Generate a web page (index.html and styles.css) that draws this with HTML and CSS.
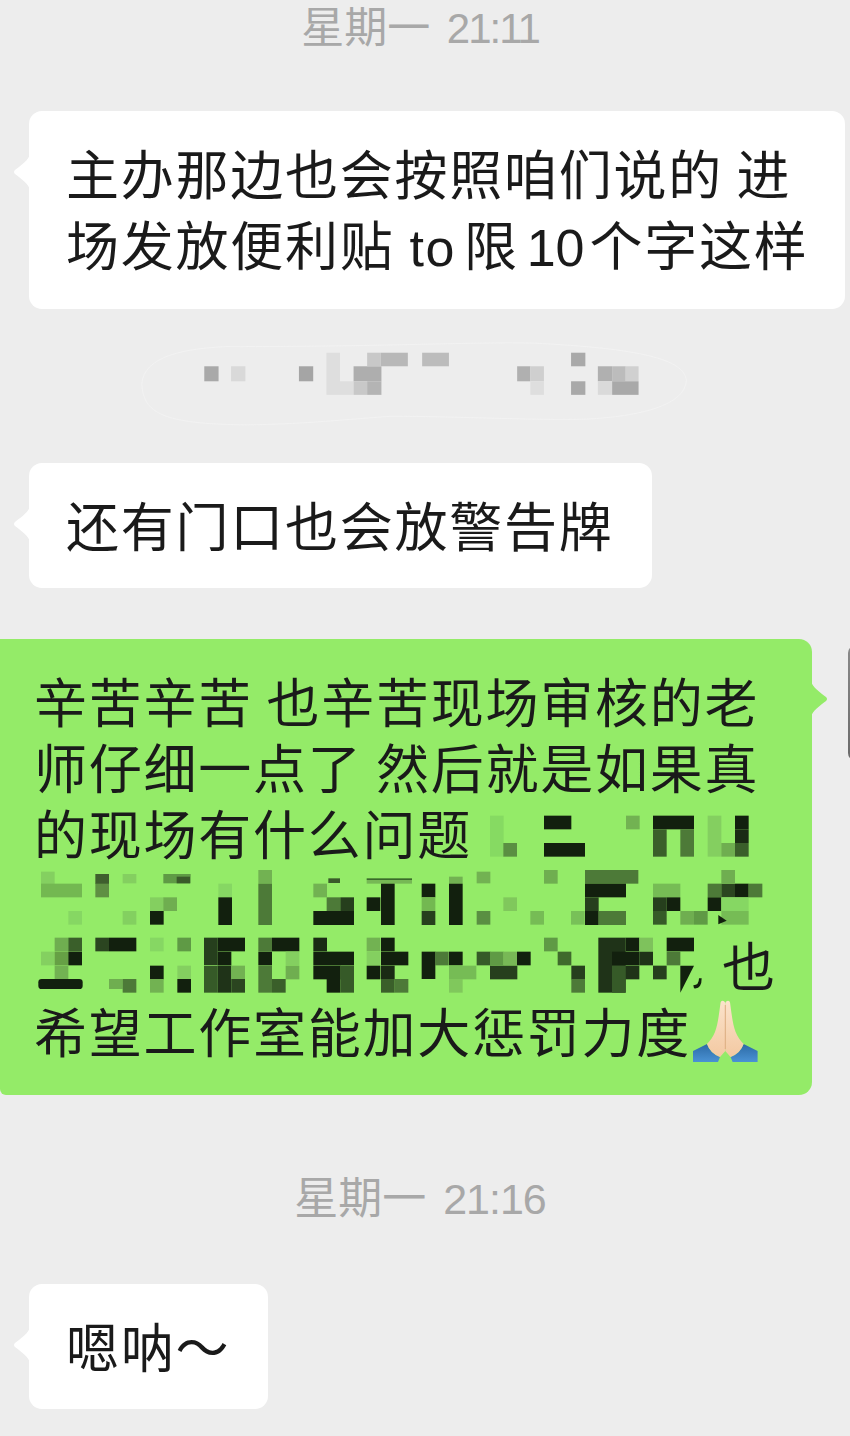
FILE: index.html
```html
<!DOCTYPE html>
<html lang="zh-CN">
<head>
    <meta charset="UTF-8">
    <meta name="viewport" content="width=device-width, initial-scale=1.0">
    <title>聊天记录</title>
    <link rel="stylesheet" href="styles.css">
</head>
<body>

<div class="chat">
    <div class="time time-first">星期一 <span class="time-num">21:11</span></div>

    <div class="row row-in msg-first">
        <div class="bubble bubble-in bubble-wide">
            <svg class="tail tail-in" viewBox="0 0 16 36"><path d="M16 0C15 6 6 12 1 16Q-1 18 1 20C6 24 15 30 16 36Z"/></svg>
            主办那边也会按照咱们说的 进<br>场发放便利贴<span class="latin latin-to">to</span>限<span class="latin latin-num">10</span>个字这样
        </div>
    </div>

    <!-- blurred system notice -->
    <svg class="notice" viewBox="0 0 1568 280">
        <path class="notice-outline" d="M240 55C130 60 10 80 5 160C10 240 60 272 300 274C450 272 540 262 700 250C900 250 1100 262 1250 258C1400 250 1525 220 1530 150C1525 90 1400 60 1100 45C900 42 700 55 240 55Z"/>
        <rect x="180" y="110" width="40" height="42" fill="#a9a9a9"/>
        <rect x="255" y="110" width="40" height="42" fill="#d9d9d9"/>
        <rect x="445" y="110" width="40" height="42" fill="#a5a5a5"/>
        <rect x="522" y="72" width="38" height="118" fill="#dedede"/>
        <rect x="560" y="152" width="38" height="38" fill="#dedede"/>
        <rect x="598" y="110" width="78" height="42" fill="#aeaeae"/>
        <rect x="598" y="152" width="38" height="38" fill="#c8c8c8"/>
        <rect x="636" y="152" width="40" height="38" fill="#b4b4b4"/>
        <rect x="636" y="72" width="38" height="38" fill="#c8c8c8"/>
        <rect x="674" y="72" width="76" height="38" fill="#b8b8b8"/>
        <rect x="790" y="72" width="75" height="38" fill="#bcbcbc"/>
        <rect x="1056" y="110" width="37" height="42" fill="#b0b0b0"/>
        <rect x="1093" y="110" width="38" height="42" fill="#cfcfcf"/>
        <rect x="1093" y="152" width="38" height="38" fill="#dedede"/>
        <rect x="1207" y="72" width="40" height="38" fill="#a9a9a9"/>
        <rect x="1207" y="152" width="40" height="38" fill="#a9a9a9"/>
        <rect x="1282" y="110" width="40" height="42" fill="#b0b0b0"/>
        <rect x="1322" y="110" width="38" height="42" fill="#bcbcbc"/>
        <rect x="1360" y="110" width="36" height="42" fill="#d0d0d0"/>
        <rect x="1282" y="152" width="40" height="38" fill="#dadada"/>
        <rect x="1322" y="152" width="74" height="38" fill="#a9a9a9"/>
    </svg>

    <div class="row row-in">
        <div class="bubble bubble-in">
            <svg class="tail tail-in" viewBox="0 0 16 36"><path d="M16 0C15 6 6 12 1 16Q-1 18 1 20C6 24 15 30 16 36Z"/></svg>
            还有门口也会放警告牌
        </div>
    </div>

    <div class="row row-out">
        <div class="bubble bubble-out">
            <svg class="tail tail-out" viewBox="0 0 16 36"><path d="M0 0C1 6 10 12 15 16Q17 18 15 20C10 24 1 30 0 36Z"/></svg>
            辛苦辛苦 也辛苦现场审核的老<br>师仔细一点了 然后就是如果真<br>的现场有什么问题<br><br><span class="gap-line"></span>也<br>希望工作室能加大惩罚力度<svg class="emoji" viewBox="0 0 67 64">
                <defs>
                    <linearGradient id="skin" x1="0" y1="0" x2="0" y2="1"><stop offset="0" stop-color="#fbe3cb"/><stop offset="1" stop-color="#f3c9a2"/></linearGradient>
                    <linearGradient id="sleeve" x1="0" y1="0" x2="0" y2="1"><stop offset="0" stop-color="#2c6aa6"/><stop offset="1" stop-color="#4a92d4"/></linearGradient>
                </defs>
                <path fill="url(#sleeve)" d="M1 52L15 45Q18 54 28 58L26 63H1Z"/>
                <path fill="url(#sleeve)" d="M65.600 52L51.600 45Q48.600 54 38.600 58L40.600 63H65.600Z"/>
                <path fill="url(#skin)" d="M33.300 4C32 1 29 1 28.500 4C27 15 26 25 23 33C21 38 18 42 15 45Q18 54 28 58L33.300 52Z"/>
                <path fill="url(#skin)" d="M33.300 4C34.600 1 37.600 1 38.100 4C39.600 15 40.600 25 43.600 33C45.600 38 48.600 42 51.600 45Q48.600 54 38.600 58L33.300 52Z"/>
                <path fill="none" stroke="#e0ac84" stroke-width="1" d="M33.300 6V50"/>
            </svg>

            <!-- pixelated part of the message -->
            <svg class="mosaic" viewBox="0 0 2550 1368">
                <g transform="translate(0 483)">
                    <rect x="123" y="215" width="41" height="41" fill="#84d060"/>
                    <rect x="123" y="251" width="123" height="41" fill="#73b851"/>
                    <rect x="205" y="333" width="41" height="41" fill="#86d763"/>
                    <rect x="286" y="222" width="41" height="30" fill="#3f5f2e"/>
                    <rect x="286" y="251" width="41" height="41" fill="#5f8f43"/>
                    <rect x="368" y="222" width="41" height="28" fill="#84cf60"/>
                    <rect x="368" y="333" width="41" height="41" fill="#83d060"/>
                    <rect x="490" y="222" width="82" height="28" fill="#5f9a45"/>
                    <rect x="530" y="230" width="40" height="20" fill="#3a5a2a"/>
                    <rect x="450" y="292" width="41" height="41" fill="#84cf60"/>
                    <rect x="490" y="292" width="41" height="41" fill="#6fae50"/>
                    <rect x="450" y="333" width="41" height="41" fill="#12200e"/>
                    <rect x="655" y="251" width="41" height="41" fill="#86d763"/>
                    <rect x="655" y="292" width="41" height="83" fill="#12200e"/>
                    <rect x="775" y="210" width="41" height="41" fill="#72b252"/>
                    <rect x="775" y="251" width="41" height="124" fill="#4d7a38"/>
                    <rect x="940" y="251" width="41" height="41" fill="#72b252"/>
                    <rect x="980" y="292" width="41" height="41" fill="#4d7a38"/>
                    <rect x="1021" y="292" width="41" height="41" fill="#263f1d"/>
                    <rect x="940" y="333" width="122" height="42" fill="#12200e"/>
                    <rect x="985" y="235" width="35" height="14" fill="#3a5a2a"/>
                    <rect x="1100" y="235" width="136" height="5" fill="#3a6a2a"/>
                    <rect x="1100" y="240" width="136" height="11" fill="#76b855"/>
                    <rect x="1143" y="251" width="41" height="124" fill="#12200e"/>
                    <rect x="1100" y="292" width="41" height="41" fill="#12200e"/>
                    <rect x="1265" y="251" width="41" height="41" fill="#12200e"/>
                    <rect x="1265" y="292" width="41" height="41" fill="#73b851"/>
                    <rect x="1265" y="333" width="41" height="42" fill="#263f1d"/>

                    <rect x="164" y="413" width="41" height="41" fill="#6fae50"/>
                    <rect x="205" y="413" width="41" height="41" fill="#3a5f2a"/>
                    <rect x="123" y="455" width="41" height="41" fill="#84d060"/>
                    <rect x="164" y="455" width="41" height="41" fill="#66a045"/>
                    <rect x="205" y="455" width="41" height="41" fill="#12200e"/>
                    <rect x="164" y="497" width="41" height="40" fill="#72b252"/>
                    <rect x="115" y="537" width="133" height="30" rx="10" fill="#12200e"/>
                    <rect x="286" y="413" width="41" height="41" fill="#2b4520"/>
                    <rect x="327" y="413" width="82" height="41" fill="#12200e"/>
                    <rect x="450" y="413" width="41" height="41" fill="#86d763"/>
                    <rect x="532" y="413" width="41" height="41" fill="#5f9a45"/>
                    <rect x="450" y="497" width="41" height="41" fill="#12200e"/>
                    <rect x="532" y="497" width="41" height="41" fill="#84cf60"/>
                    <rect x="450" y="537" width="41" height="41" fill="#72b252"/>
                    <rect x="532" y="537" width="41" height="41" fill="#12200e"/>
                    <rect x="327" y="537" width="41" height="30" fill="#6fae50"/>
                    <rect x="368" y="537" width="41" height="41" fill="#4d7a38"/>
                    <rect x="612" y="413" width="41" height="82" fill="#263f1d"/>
                    <rect x="653" y="413" width="82" height="41" fill="#12200e"/>
                    <rect x="653" y="455" width="41" height="41" fill="#12200e"/>
                    <rect x="612" y="497" width="41" height="81" fill="#365a28"/>
                    <rect x="653" y="497" width="41" height="81" fill="#1f3318"/>
                    <rect x="694" y="497" width="41" height="41" fill="#72b252"/>
                    <rect x="694" y="537" width="41" height="41" fill="#2b4520"/>
                    <rect x="775" y="413" width="41" height="41" fill="#4d7a38"/>
                    <rect x="816" y="413" width="82" height="41" fill="#12200e"/>
                    <rect x="775" y="455" width="41" height="41" fill="#12200e"/>
                    <rect x="857" y="455" width="41" height="41" fill="#84cf60"/>
                    <rect x="775" y="497" width="41" height="81" fill="#4d7a38"/>
                    <rect x="857" y="497" width="41" height="41" fill="#6fae50"/>
                    <rect x="816" y="537" width="41" height="41" fill="#3a5f2a"/>
                    <rect x="940" y="413" width="41" height="41" fill="#1a2b14"/>
                    <rect x="940" y="455" width="122" height="41" fill="#12200e"/>
                    <rect x="940" y="497" width="82" height="41" fill="#12200e"/>
                    <rect x="980" y="537" width="41" height="41" fill="#12200e"/>
                    <rect x="1021" y="497" width="41" height="81" fill="#365a28"/>
                    <rect x="1100" y="413" width="41" height="41" fill="#72b252"/>
                    <rect x="1143" y="413" width="41" height="41" fill="#12200e"/>
                    <rect x="1100" y="455" width="41" height="41" fill="#84cf60"/>
                    <rect x="1143" y="455" width="82" height="41" fill="#12200e"/>
                    <rect x="1100" y="497" width="41" height="41" fill="#12200e"/>
                    <rect x="1143" y="497" width="41" height="41" fill="#1a2b14"/>
                    <rect x="1143" y="537" width="41" height="41" fill="#3a5f2a"/>
                    <rect x="1184" y="537" width="41" height="41" fill="#4d7a38"/>
                    <rect x="1265" y="455" width="41" height="82" fill="#12200e"/>
                </g>
                <g transform="translate(1275 483)">
                    <rect x="195" y="47" width="41" height="123" fill="#86da62"/>
                    <rect x="235" y="129" width="41" height="41" fill="#5a8f42"/>
                    <rect x="357" y="47" width="82" height="41" fill="#12200e"/>
                    <rect x="357" y="129" width="123" height="41" fill="#12200e"/>
                    <rect x="603" y="47" width="41" height="41" fill="#72b252"/>
                    <rect x="684" y="47" width="123" height="41" fill="#12200e"/>
                    <rect x="684" y="88" width="41" height="82" fill="#3a5f2a"/>
                    <rect x="766" y="88" width="41" height="82" fill="#4d7a38"/>
                    <rect x="848" y="47" width="41" height="123" fill="#84cf60"/>
                    <rect x="930" y="47" width="41" height="41" fill="#12200e"/>
                    <rect x="930" y="88" width="41" height="41" fill="#1a2b14"/>
                    <rect x="889" y="129" width="41" height="41" fill="#6fae50"/>
                    <rect x="930" y="129" width="41" height="41" fill="#3a5f2a"/>

                    <rect x="72" y="230" width="41" height="21" fill="#72b252"/>
                    <rect x="72" y="251" width="41" height="124" fill="#12200e"/>
                    <rect x="155" y="215" width="41" height="35" fill="#72b252"/>
                    <rect x="155" y="333" width="41" height="41" fill="#5a8f42"/>
                    <rect x="235" y="292" width="41" height="41" fill="#80c85c"/>
                    <rect x="316" y="333" width="41" height="41" fill="#76bc55"/>
                    <rect x="357" y="210" width="41" height="41" fill="#6fae50"/>
                    <rect x="480" y="210" width="160" height="41" fill="#4d7a38"/>
                    <rect x="480" y="251" width="123" height="41" fill="#12200e"/>
                    <rect x="480" y="292" width="41" height="41" fill="#263f1d"/>
                    <rect x="480" y="333" width="41" height="42" fill="#12200e"/>
                    <rect x="521" y="333" width="82" height="42" fill="#4d7a38"/>
                    <rect x="438" y="333" width="41" height="41" fill="#78c058"/>
                    <rect x="684" y="251" width="82" height="41" fill="#76bc55"/>
                    <rect x="684" y="292" width="41" height="41" fill="#263f1d"/>
                    <rect x="725" y="292" width="41" height="41" fill="#12200e"/>
                    <rect x="684" y="333" width="41" height="41" fill="#365a28"/>
                    <rect x="766" y="333" width="41" height="41" fill="#6fae50"/>
                    <rect x="807" y="333" width="41" height="41" fill="#5f9a45"/>
                    <rect x="848" y="251" width="41" height="41" fill="#4d7a38"/>
                    <rect x="889" y="251" width="41" height="41" fill="#2b4520"/>
                    <rect x="930" y="251" width="41" height="41" fill="#12200e"/>
                    <rect x="971" y="251" width="41" height="41" fill="#4d7a38"/>
                    <rect x="889" y="210" width="41" height="41" fill="#6fae50"/>
                    <rect x="848" y="292" width="41" height="41" fill="#12200e"/>
                    <rect x="889" y="292" width="82" height="41" fill="#86d763"/>
                    <rect x="889" y="333" width="82" height="41" fill="#76bc55"/>
                    <path d="M880 345L905 362L880 373Z" fill="#12200e"/>

                    <rect x="30" y="455" width="41" height="41" fill="#4d7a38"/>
                    <rect x="72" y="455" width="41" height="41" fill="#12200e"/>
                    <rect x="72" y="497" width="82" height="41" fill="#76bc55"/>
                    <rect x="72" y="537" width="41" height="41" fill="#80c85c"/>
                    <rect x="155" y="455" width="41" height="41" fill="#365a28"/>
                    <rect x="195" y="455" width="41" height="41" fill="#5f9a45"/>
                    <rect x="235" y="455" width="41" height="41" fill="#78b856"/>
                    <rect x="276" y="455" width="41" height="41" fill="#12200e"/>
                    <rect x="195" y="497" width="82" height="41" fill="#263f1d"/>
                    <rect x="357" y="413" width="41" height="41" fill="#5f9a45"/>
                    <rect x="398" y="455" width="41" height="41" fill="#3f6a2c"/>
                    <rect x="439" y="497" width="41" height="41" fill="#263f1d"/>
                    <rect x="439" y="537" width="41" height="41" fill="#4d7a38"/>
                    <rect x="520" y="413" width="82" height="165" fill="#1f3318"/>
                    <rect x="602" y="413" width="41" height="41" fill="#12200e"/>
                    <rect x="643" y="413" width="41" height="41" fill="#7ec25c"/>
                    <rect x="561" y="455" width="82" height="41" fill="#12200e"/>
                    <rect x="643" y="455" width="41" height="41" fill="#1f3318"/>
                    <rect x="561" y="497" width="41" height="81" fill="#365a28"/>
                    <rect x="602" y="497" width="41" height="41" fill="#1f3318"/>
                    <rect x="684" y="497" width="41" height="41" fill="#263f1d"/>
                    <rect x="725" y="413" width="82" height="41" fill="#12200e"/>
                    <rect x="725" y="455" width="41" height="41" fill="#4d7a38"/>
                    <path d="M766 497H807L766 578Z" fill="#12200e"/>
                    <path d="M807 565Q830 568 830 535L822 535Q822 556 805 556Z" fill="#12200e"/>
                </g>
            </svg>
        </div>
        <div class="avatar"></div>
    </div>

    <div class="time time-second">星期一 <span class="time-num">21:16</span></div>

    <div class="row row-in msg-last">
        <div class="bubble bubble-in">
            <svg class="tail tail-in" viewBox="0 0 16 36"><path d="M16 0C15 6 6 12 1 16Q-1 18 1 20C6 24 15 30 16 36Z"/></svg>
            嗯呐～
        </div>
    </div>
</div>

</body>
</html>
```

FILE: styles.css
```css
html, body {
    margin: 0;
    padding: 0;
    height: 1436px;
    overflow: hidden;
}
body {
    background-color: #ededed;
    font-family: "Noto Sans CJK SC", "Noto Sans", sans-serif;
    color: #1a1a1a;
}
.chat {
    width: 850px;
}
.time {
    text-align: center;
    color: #a8a8a8;
    font-size: 43px;
    line-height: 54px;
    margin: -3px 0 0 -10px;
}
.time-num {
    font-family: "Liberation Sans", sans-serif;
    font-size: 42px;
    letter-spacing: -2px;
    margin-left: 7px;
    line-height: 1;
}
.time-second {
    font-size: 44px;
    margin-top: 73px;
}
.time-second .time-num {
    font-size: 43px;
    letter-spacing: -1px;
}
.row {
    display: flex;
}
.row-in {
    padding-left: 29px;
}
.row-out {
    margin-top: 51px;
}
.msg-first {
    margin-top: 60px;
}
.msg-last {
    margin-top: 62px;
}
.bubble {
    position: relative;
    font-size: 53px;
    letter-spacing: 1.750px;
    white-space: nowrap;
    border-radius: 13px;
}
.bubble-in {
    background: white;
    padding: 26px 38px 28px 37px;
    line-height: 71px;
}
.bubble-wide {
    flex: none;
    width: 741px;
    padding-bottom: 30px;
}
.bubble-out {
    flex: none;
    background: #94eb68;
    padding: 28px 0 32px 34px;
    width: 778px;
    line-height: 66px;
    border-radius: 0 13px 13px 6px;
}
.tail {
    position: absolute;
    width: 16px;
    height: 36px;
}
.tail-in {
    left: -15px;
    top: 43px;
    fill: white;
}
.tail-out {
    right: -15px;
    top: 42px;
    fill: #94eb68;
}
.latin {
    font-family: "Liberation Sans", sans-serif;
    letter-spacing: 0;
    line-height: 1;
    font-size: 52px;
}
.latin-to {
    letter-spacing: 1.500px;
    margin: 0 8px 0 15px;
}
.latin-num {
    margin: 0 5px 0 8px;
}
.notice {
    display: block;
    width: 560px;
    height: 100px;
    margin: 18px 0 36px 140px;
}
.notice-outline {
    fill: none;
    stroke: #f3f3f3;
    stroke-width: 2.500;
}
.gap-line {
    display: inline-block;
    width: 688px;
}
.emoji {
    width: 67px;
    height: 64px;
    margin-left: 1px;
    vertical-align: -10px;
}
.mosaic {
    position: absolute;
    left: 0;
    top: 0;
    width: 850px;
    height: 456px;
}
.avatar {
    flex: none;
    width: 90px;
    height: 116px;
    margin: 6px 0 0 36px;
    border-radius: 8px;
    background: linear-gradient(#8a8a8a, #6a6a6a);
}
```
